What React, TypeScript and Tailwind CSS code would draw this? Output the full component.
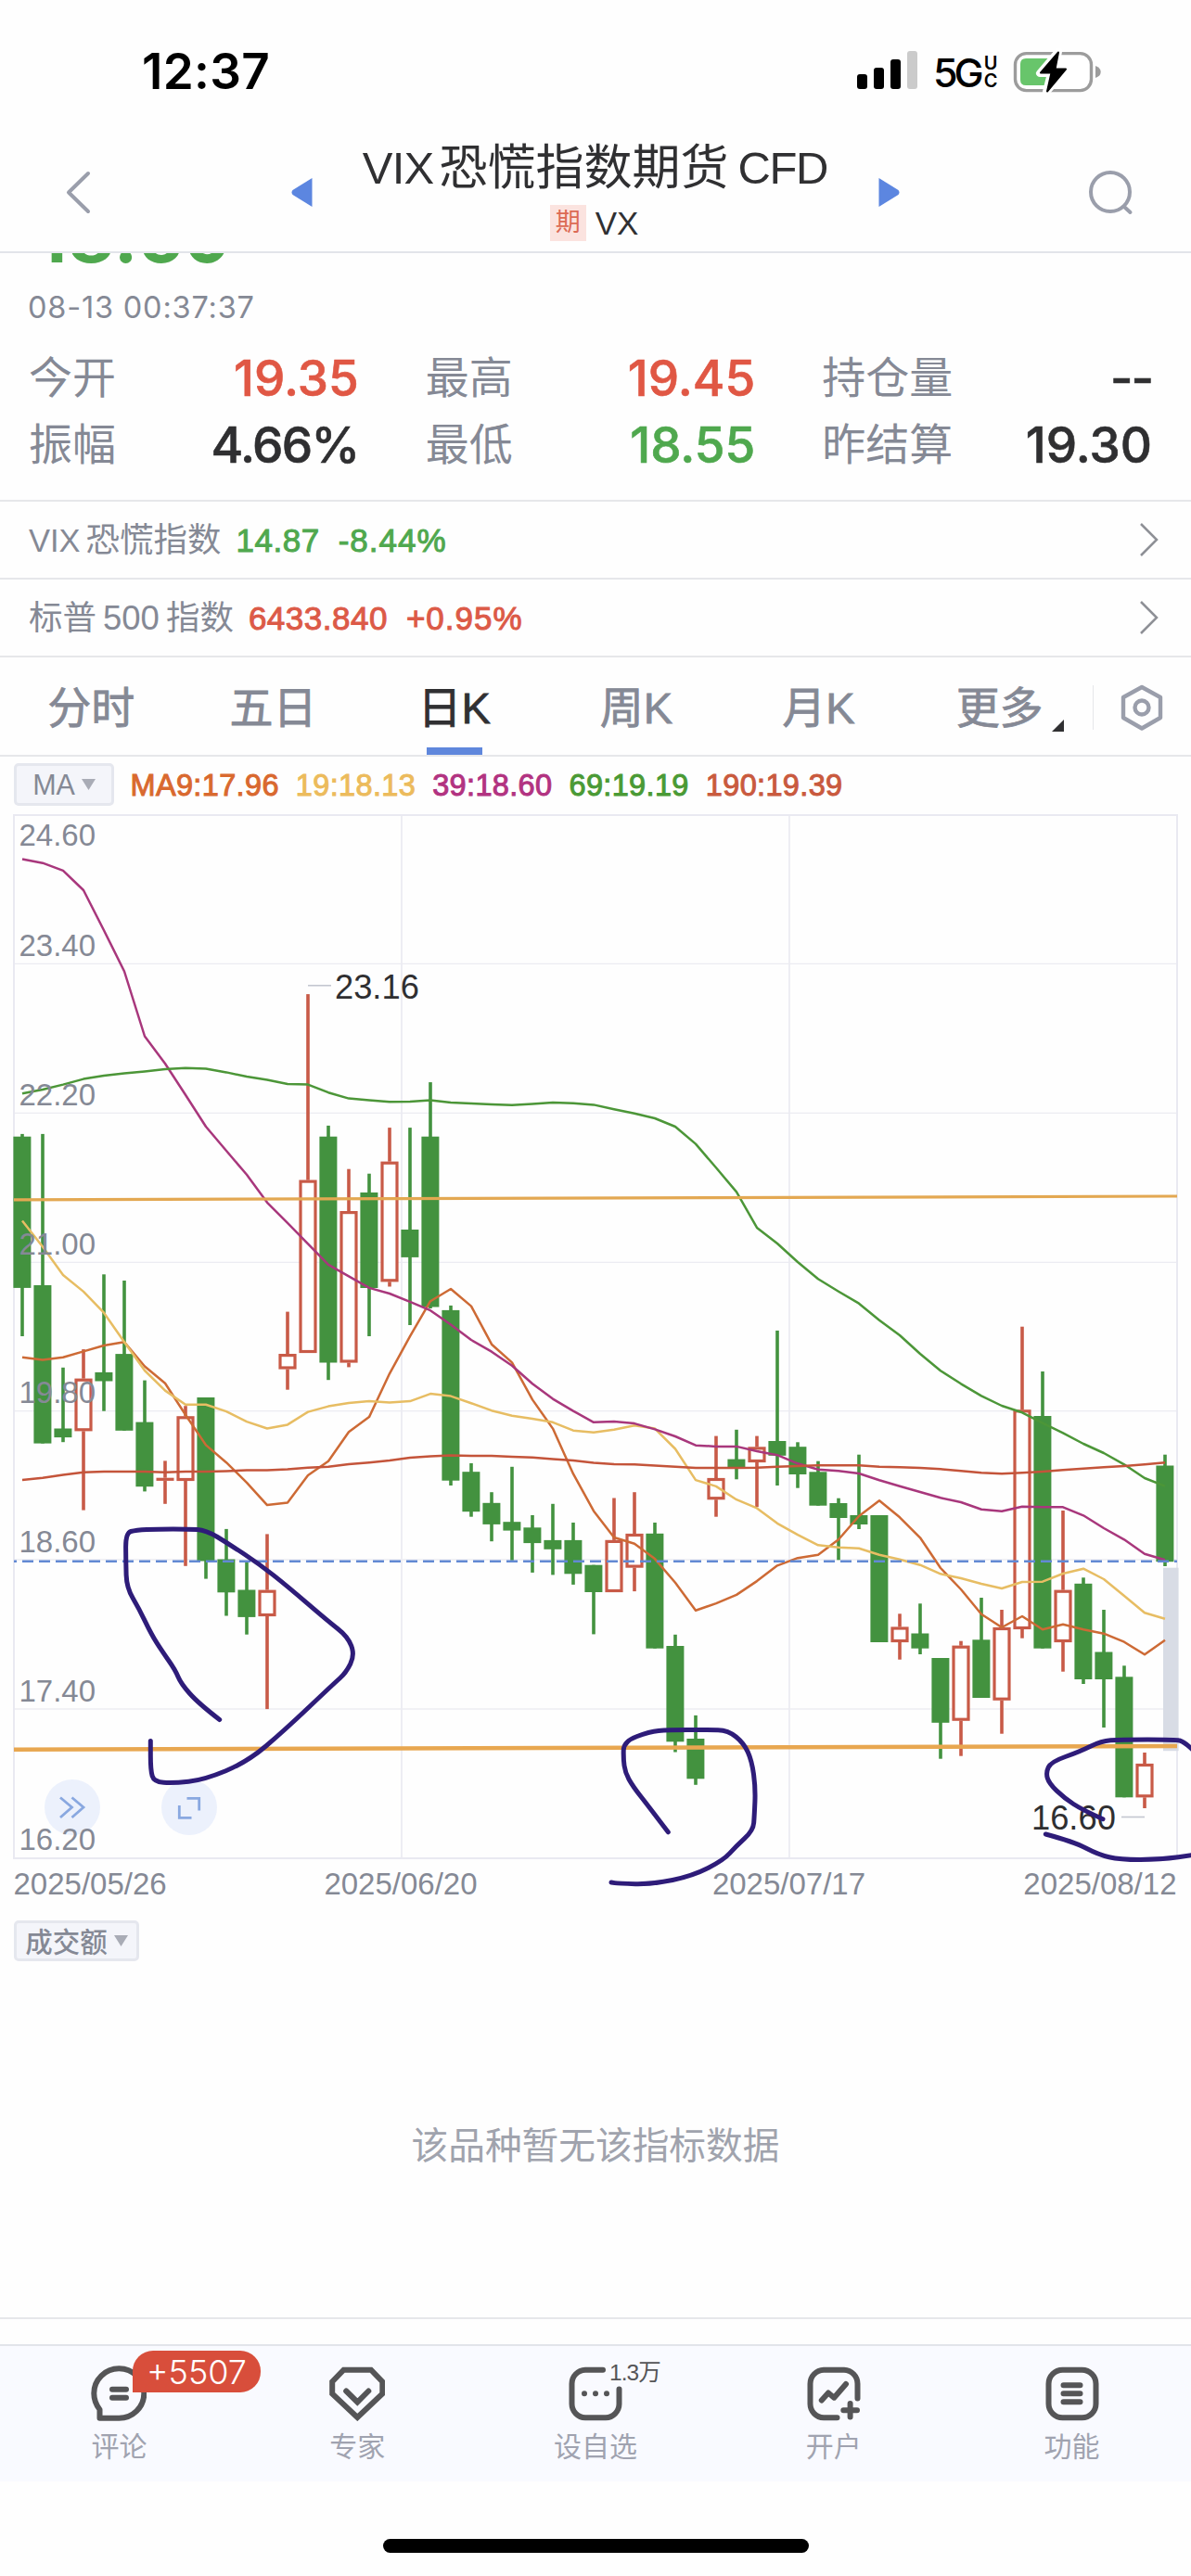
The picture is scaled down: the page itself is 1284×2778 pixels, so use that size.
import React from "react";

type Candle = [kind: "g" | "r", high: number, top: number, bottom: number, low: number];

const CANDLES: Candle[] = [
  ["g", 1222.9, 1225.7, 1388.9, 1441],
  ["g", 1222.9, 1386, 1556.6, 1556.6],
  ["g", 1474.8, 1540.5, 1550.1, 1555.2],
  ["r", 1455.1, 1486.7, 1543.3, 1628.6],
  ["g", 1374.3, 1479.9, 1489.5, 1521.7],
  ["g", 1381, 1460.1, 1542.8, 1542.8],
  ["g", 1488.6, 1533.6, 1603.2, 1608.4],
  ["r", 1575.4, 1593.7, 1596.9, 1621.8],
  ["r", 1516.2, 1527.3, 1597, 1688.8],
  ["g", 1507, 1507, 1683.5, 1702.6],
  ["g", 1648.9, 1681.5, 1717.3, 1742.5],
  ["g", 1683.3, 1714.5, 1743.9, 1762.7],
  ["r", 1654.4, 1714.7, 1743, 1843.1],
  ["r", 1414.6, 1460.1, 1476.5, 1498.7],
  ["r", 1072.1, 1272.6, 1459, 1459],
  ["g", 1213.9, 1225.7, 1469.5, 1488.2],
  ["r", 1260.7, 1306.1, 1469.5, 1474.4],
  ["g", 1265.7, 1286, 1389, 1441],
  ["r", 1216.1, 1252.7, 1382.3, 1387.5],
  ["g", 1216.1, 1326, 1355.9, 1429],
  ["g", 1167.1, 1225.7, 1409.5, 1411],
  ["g", 1407.9, 1412.9, 1596.7, 1602],
  ["g", 1578, 1587.2, 1630.2, 1635.7],
  ["g", 1609.2, 1620.8, 1643.9, 1662.2],
  ["g", 1581.8, 1641.2, 1650.6, 1682.8],
  ["g", 1634, 1647.3, 1664.1, 1695.9],
  ["g", 1621.8, 1660.9, 1670.8, 1698.4],
  ["g", 1642, 1660.9, 1697.3, 1708.9],
  ["g", 1687.7, 1687.7, 1717, 1762.4],
  ["r", 1615.5, 1660.9, 1717, 1717],
  ["r", 1609.2, 1654, 1690.6, 1716.1],
  ["g", 1642, 1653.8, 1777.7, 1777.7],
  ["g", 1762.8, 1775, 1878.3, 1889.5],
  ["g", 1849.9, 1875, 1918.3, 1924.8],
  ["r", 1548.6, 1594, 1617.2, 1635.7],
  ["g", 1541.8, 1573.6, 1582, 1595.3],
  ["r", 1548.6, 1560.4, 1577, 1625.2],
  ["g", 1434.9, 1554, 1569.8, 1602],
  ["g", 1555.3, 1560.2, 1590, 1604.7],
  ["g", 1575.7, 1587.3, 1623.7, 1623.7],
  ["g", 1615.7, 1621, 1637, 1682.3],
  ["g", 1568.7, 1634, 1644, 1649],
  ["g", 1634, 1634, 1771, 1771],
  ["r", 1740.3, 1754.5, 1771, 1789.7],
  ["g", 1729.3, 1761.5, 1777.7, 1784],
  ["g", 1788, 1788, 1857.8, 1896.7],
  ["r", 1769.7, 1774.7, 1855.7, 1893.7],
  ["g", 1723, 1768.3, 1831, 1831],
  ["r", 1736, 1755, 1833.7, 1869.7],
  ["r", 1430.7, 1520.3, 1757, 1766.7],
  ["g", 1479, 1527, 1777.7, 1777.7],
  ["r", 1629, 1714.7, 1771, 1802.7],
  ["g", 1701.3, 1707.8, 1811, 1816],
  ["g", 1736, 1781.5, 1811, 1863],
  ["g", 1796.3, 1808.3, 1938.3, 1938.3],
  ["r", 1890, 1902, 1938.3, 1950],
  ["g", 1568.7, 1580.5, 1684.2, 1689],
];

const MA39 = [926.4, 930.7, 938.9, 960, 1003.2, 1047.5, 1117.5, 1147, 1180.7, 1215, 1241, 1266.8, 1296.8, 1318.9, 1341.4, 1363.9, 1376.4, 1388.9, 1395, 1403.9, 1413.2, 1428.6, 1445, 1457.7, 1472.8, 1492.2, 1508.6, 1521.6, 1533.8, 1533, 1535.1, 1541.4, 1549, 1558.7, 1559.9, 1559.9, 1565, 1569.2, 1578.3, 1584.7, 1586.3, 1589, 1596.3, 1602.7, 1609, 1615.3, 1620, 1627.7, 1629.7, 1624.7, 1625.3, 1625.3, 1634.3, 1648, 1660.3, 1675.7, 1682.3];
const MA69 = [1179.3, 1175, 1169.6, 1163.6, 1160, 1157.5, 1155.4, 1152.9, 1151.8, 1152.5, 1156.4, 1161, 1164.6, 1168.9, 1169.6, 1178.2, 1184.6, 1186.4, 1188.2, 1187.9, 1186.4, 1188.9, 1190, 1190.9, 1191.8, 1190.5, 1188.9, 1189.8, 1191.4, 1196.2, 1200.7, 1206, 1215, 1233.6, 1259.3, 1285.4, 1323.9, 1341, 1361, 1379.3, 1392.7, 1405.7, 1423.7, 1440, 1460, 1478.3, 1492.3, 1505.3, 1516, 1523.3, 1534.7, 1545.3, 1557, 1567, 1579.3, 1594, 1602.7];
const MA19 = [1316.4, 1344.6, 1375, 1392.9, 1415.7, 1447.3, 1478, 1499.6, 1514.8, 1514.8, 1522.1, 1533.1, 1540.5, 1536.4, 1522.6, 1516.6, 1512.9, 1511.1, 1512.5, 1511.1, 1503.1, 1505.6, 1513.2, 1521.2, 1526.7, 1530, 1533.8, 1542.7, 1544.8, 1541.8, 1537.2, 1540.6, 1562.5, 1596.1, 1602.9, 1617.2, 1626.4, 1642.8, 1655.2, 1666.3, 1668.7, 1669.7, 1676.7, 1681.7, 1687.7, 1697.3, 1702, 1708, 1713, 1706, 1705.7, 1697, 1691.7, 1703, 1721, 1739.3, 1745.7];
const MA9 = [1463.8, 1466.6, 1463.8, 1457.4, 1451, 1447.3, 1473.5, 1491.8, 1525.8, 1558.4, 1577.2, 1598.8, 1623.1, 1620.4, 1591, 1575.8, 1544.2, 1528.1, 1481.3, 1441.2, 1403.2, 1390, 1408.6, 1449.7, 1469.4, 1509.4, 1540.6, 1589.4, 1629.4, 1658, 1664.7, 1681.1, 1706.8, 1736.7, 1729.1, 1719.9, 1705.1, 1688.3, 1680.2, 1676.7, 1660.3, 1635, 1618.3, 1636.3, 1658.3, 1691, 1714, 1740.7, 1755, 1743, 1757.3, 1751.7, 1757.3, 1761.7, 1770.7, 1784.3, 1768.7];
const MA190 = [1596, 1593.8, 1590.5, 1587.8, 1586.9, 1586.9, 1586.9, 1587.8, 1586.9, 1586.9, 1586.4, 1585.5, 1585.5, 1584.6, 1582.7, 1581.8, 1579.1, 1577.2, 1574.9, 1572.1, 1570.5, 1569.6, 1570, 1570, 1570.9, 1571.7, 1573.4, 1575.1, 1577.6, 1578.9, 1579.3, 1580.6, 1581.8, 1583.1, 1583.1, 1583.1, 1582.7, 1581.8, 1581, 1580.3, 1580.3, 1580.3, 1581.7, 1582.3, 1583, 1584.3, 1586.3, 1588.3, 1589.3, 1588.3, 1587, 1585.3, 1583.7, 1582.3, 1581, 1579.3, 1577.3];

const xAt = (i: number) => 24 + 22 * i;
const poly = (ys: number[]) => ys.map((y, i) => `${xAt(i)},${y}`).join(" ");

// Smooths a pen stroke by running quadratic curves through segment midpoints.
function smooth(p: number[][]) {
  let d = `M${p[0][0]} ${p[0][1]}`;
  for (let i = 1; i < p.length - 1; i++) {
    const mx = (p[i][0] + p[i + 1][0]) / 2;
    const my = (p[i][1] + p[i + 1][1]) / 2;
    d += ` Q${p[i][0]} ${p[i][1]} ${mx} ${my}`;
  }
  const l = p[p.length - 1];
  return `${d} L${l[0]} ${l[1]}`;
}

const PEN = [
  [[236.7, 1854.5], [214, 1837], [195, 1815.5], [189, 1801], [175, 1781], [163.3, 1762.7], [150, 1735], [136.5, 1712], [135.7, 1684.7], [135.5, 1653], [146.7, 1650], [170, 1648.9], [203.3, 1648.9], [222, 1650], [246.7, 1665], [280, 1687], [310, 1710.8], [353.3, 1748], [375, 1765], [382.5, 1784.8], [373, 1804], [360, 1815.5], [306.7, 1866], [266.7, 1900], [220, 1919.5], [186.7, 1923], [166, 1921.5], [162.3, 1909], [162.3, 1877.5]],
  [[720.3, 1975.8], [700, 1949], [682, 1926], [674, 1911.4], [672, 1896.6], [672.5, 1878], [700, 1867.5], [720, 1865.5], [763.3, 1865.5], [785, 1866], [802, 1880], [810.5, 1898.7], [814.5, 1928.2], [813.3, 1957.7], [812, 1974], [793.3, 1991.3], [780, 2006], [746.7, 2023], [703.3, 2032], [666.7, 2031.3], [659, 2030]],
  [[1189, 1961.7], [1167.3, 1952], [1147.3, 1939], [1131, 1923.3], [1127.5, 1911.7], [1133, 1900], [1164, 1889], [1187.3, 1877.5], [1207.3, 1876], [1267.3, 1876], [1276, 1878], [1290, 1891]],
  [[1127.3, 1978], [1157.3, 1986], [1184, 2000], [1207.3, 2005.5], [1250.7, 2005.5], [1290, 2000]],
];

const AXIS: [string, number][] = [
  ["24.60", 912], ["23.40", 1030.7], ["22.20", 1192], ["21.00", 1352.9],
  ["19.80", 1513], ["18.60", 1674], ["17.40", 1834.8], ["16.20", 1995],
];

function Chart() {
  return (
    <svg className="block h-[1184px] w-full font-['Liberation_Sans',sans-serif]" viewBox="0 876 1284 1184">
      <g stroke="#ececf2" strokeWidth="1.3">
        {[1039.3, 1200.4, 1361.4, 1521.7, 1682, 1843].map((y) => (
          <line key={y} x1="15" x2="1269" y1={y} y2={y} />
        ))}
        <line x1="433" x2="433" y1="879" y2="2004" strokeWidth="1.8" />
        <line x1="851" x2="851" y1="879" y2="2004" strokeWidth="1.8" />
        <rect x="15" y="879" width="1254" height="1125" fill="none" stroke="#e9e9f1" strokeWidth="2" />
      </g>
      <rect x="1254" y="1690.7" width="16.6" height="197.5" fill="#d8dce5" />
      {[78, 204].map((x) => (
        <circle key={x} cx={x} cy="1949" r="30" fill="#ecf1fc" />
      ))}
      <g fill="none" stroke="#89a8e0" strokeWidth="2.8">
        <path d="M65 1938.5 L77.5 1949 L65 1960 M77.5 1938.5 L90 1949 L77.5 1960" />
        <path d="M201.5 1939.3 H214.7 V1952.5 M193.3 1947 V1960.3 H206.5" />
      </g>
      {CANDLES.map(([kind, high, top, bottom, low], i) => {
        const x = xAt(i);
        if (kind === "g")
          return (
            <g key={i} fill="#43923f">
              <rect x={x - 1.8} y={high} width="3.6" height={low - high} />
              <rect x={x - 9.6} y={top} width="19" height={bottom - top} />
            </g>
          );
        return (
          <g key={i} fill="#c85a47">
            <rect x={x - 1.8} y={high} width="3.6" height={top - high} />
            <rect x={x - 1.8} y={bottom} width="3.6" height={low - bottom} />
            {bottom - top < 5 ? (
              <rect x={x - 9.5} y={top} width="19" height={bottom - top} />
            ) : (
              <rect x={x - 8} y={top + 1.5} width="16" height={bottom - top - 3} fill="#fff" stroke="#c85a47" strokeWidth="3.2" />
            )}
          </g>
        );
      })}
      <g fill="none" strokeWidth="2.5" strokeLinejoin="round">
        <polyline points={poly(MA9)} stroke="#cd6a35" />
        <polyline points={poly(MA19)} stroke="#e7bd63" />
        <polyline points={poly(MA39)} stroke="#a8377c" />
        <polyline points={poly(MA69)} stroke="#4c9638" />
        <polyline points={poly(MA190)} stroke="#c4543a" />
      </g>
      <line x1="15" y1="1683.7" x2="1269" y2="1683.7" stroke="#6289d3" strokeWidth="2.6" strokeDasharray="12 6" strokeDashoffset="9" />
      <line x1="15" y1="1293.9" x2="1269" y2="1290" stroke="#e3a852" strokeWidth="3.2" />
      <line x1="15" y1="1886.7" x2="1269" y2="1883" stroke="#e8a750" strokeWidth="4.6" />
      <g fill="#858995" fontSize="33">
        {AXIS.map(([t, y]) => (
          <text key={t} x="20.5" y={y}>{t}</text>
        ))}
        <text x="14.5" y="2042.5">2025/05/26</text>
        <text x="432" y="2042.5" textAnchor="middle">2025/06/20</text>
        <text x="850.5" y="2042.5" textAnchor="middle">2025/07/17</text>
        <text x="1268.5" y="2042.5" textAnchor="end">2025/08/12</text>
      </g>
      <g stroke="#c4c7d0" strokeWidth="1.6">
        <line x1="332" x2="357" y1="1062.8" y2="1062.8" />
        <line x1="1209" x2="1234" y1="1959.5" y2="1959.5" />
      </g>
      <g fill="#2f2f31" fontSize="36.3">
        <text x="361" y="1076.6">23.16</text>
        <text x="1112" y="1972.7">16.60</text>
      </g>
      <g fill="none" stroke="#2e1c79" strokeWidth="5" strokeLinecap="round" strokeLinejoin="round">
        {PEN.map((p, i) => (
          <path key={i} d={smooth(p)} />
        ))}
      </g>
    </svg>
  );
}

function StatusBar() {
  return (
    <div className="flex h-[150px] items-start justify-between pl-[153px] pr-[97px]">
      <span className="mt-[45px] font-['Inter',sans-serif] text-[53px] leading-[64px] font-semibold tracking-[0.3px] text-black">12:37</span>
      <div className="mt-[52px] flex items-start">
        <svg className="mr-[16px] h-[48px] w-[66px]" viewBox="925 52 66 48">
          <rect x="925" y="80" width="11" height="16" rx="3" />
          <rect x="943" y="73" width="11" height="23" rx="3" />
          <rect x="961" y="64" width="11" height="32" rx="3" />
          <rect x="979" y="55" width="11" height="41" rx="3" fill="#cbcbcb" />
        </svg>
        <span className="mt-[10px] w-[53px] font-['Inter',sans-serif] text-[43px] leading-[32px] font-medium tracking-[-4px] text-black">5G</span>
        <span className="mt-[7px] mr-[14px] flex w-[18px] flex-col items-center font-['Inter',sans-serif] text-[20px] leading-[19px] font-semibold text-black">
          <span>U</span>
          <span>C</span>
        </span>
        <svg className="h-[50px] w-[96px]" viewBox="1091 50 96 50">
          <rect x="1094.5" y="55.6" width="82" height="40" rx="12" fill="#fff" stroke="#9c9c9c" strokeWidth="3.4" />
          <path d="M1106 61 H1130 V90 H1106 Q1100 90 1100 84 V67 Q1100 61 1106 61Z" fill="#68c56b" />
          <path d="M1181 69 Q1186.7 71 1186.7 75.5 Q1186.7 80 1181 82Z" fill="#9c9c9c" />
          <path d="M1141 53.5 L1121 77 H1133 L1128 97 L1150 72.5 H1137.5Z" fill="#000" stroke="#fff" strokeWidth="8" strokeLinejoin="round" />
          <path d="M1141 54.5 L1122 76.5 H1133.5 L1129 96.5 L1149 72.5 H1137.5Z" fill="#000" stroke="#000" strokeWidth="2" strokeLinejoin="round" />
        </svg>
      </div>
    </div>
  );
}

function Header() {
  return (
    <header className="flex h-[123px] items-start justify-between border-b-2 border-[#e2e4ea] pr-[61px] pl-[70px]">
      <svg className="mt-[34px] h-[48px] w-[30px]" viewBox="0 0 30 48" fill="none" stroke="#9a9eab" strokeWidth="4" strokeLinecap="round" strokeLinejoin="round">
        <path d="M25 3 L4 23.5 L25 44" />
      </svg>
      <div className="ml-[10px] flex items-start">
        <svg className="mt-[42px] mr-[55px] h-[32px] w-[23px]" viewBox="0 0 23 32" fill="#5c86e0">
          <path d="M22.5 0 V31 L1.5 18 Q-.5 15.5 1.5 13Z" />
        </svg>
        <div className="flex w-[500px] flex-col items-center">
          <div className="mt-px flex text-[49px] leading-[60px] whitespace-nowrap text-[#303032]">
            <span className="tracking-[-0.8px]">VIX</span>
            <span className="ml-[6px] text-[52px]">恐慌指数期货</span>
            <span className="ml-[10px] tracking-[-1.3px]">CFD</span>
          </div>
          <div className="mt-[10px] mr-[2px] flex items-center">
            <span className="flex h-[39px] w-[39px] items-center justify-center bg-[#fbe3df] text-[27px] leading-none text-[#dc6a55]">期</span>
            <span className="ml-[10px] text-[35px] leading-[39px] text-[#303032]">VX</span>
          </div>
        </div>
        <svg className="mt-[42px] ml-[55px] h-[32px] w-[23px]" viewBox="0 0 23 32" fill="#5c86e0">
          <path d="M.5 0 V31 L21.5 18 Q23.5 15.5 21.5 13Z" />
        </svg>
      </div>
      <svg className="mt-[33px] h-[50px] w-[50px]" viewBox="0 0 50 50" fill="none" stroke="#9a9eab" strokeWidth="4" strokeLinecap="round">
        <circle cx="24" cy="24" r="21" />
        <path d="M39 40 L45.5 46" />
      </svg>
    </header>
  );
}

const QUOTES = [
  ["今开", "19.35", "tracking-[0px] text-[#e05744]"],
  ["最高", "19.45", "tracking-[0px] text-[#e05744]"],
  ["持仓量", "--", "tracking-[-2px] text-[#2f2f31]"],
  ["振幅", "4.66%", "tracking-[-1.6px] text-[#2f2f31]"],
  ["最低", "18.55", "tracking-[0px] text-[#4fa84e]"],
  ["昨结算", "19.30", "tracking-[0px] text-[#2f2f31]"],
];

function Quotes() {
  return (
    <section className="h-[266px] overflow-hidden">
      <div className="-mt-[56px] pl-[39px] font-['Inter',sans-serif] text-[77px] leading-[76px] font-bold tracking-[1px] text-[#4fa84e]">18.59</div>
      <div className="mt-[19px] pl-[30px] font-['Inter',sans-serif] text-[32.5px] leading-[40px] tracking-[0.8px] text-[#858995]">08-13 00:37:37</div>
      <div className="mt-[20px] grid grid-cols-3 gap-x-[72px] px-[31px] pr-[42px]">
        {QUOTES.map(([label, value, color]) => (
          <div key={label} className="flex h-[72px] items-center justify-between whitespace-nowrap">
            <span className="text-[47px] leading-[72px] text-[#858995]">{label}</span>
            <span className={`font-['Inter',sans-serif] text-[53px] leading-[72px] font-medium [-webkit-text-stroke:0.6px_currentColor] ${color}`}>{value}</span>
          </div>
        ))}
      </div>
    </section>
  );
}

function IndexRow({ name, value, change, color }: { name: React.ReactNode; value: string; change: string; color: string }) {
  return (
    <div className="flex h-[84px] items-center border-t-2 border-[#e6e7ea] pr-[34px] pl-[31px] whitespace-nowrap">
      <span className="mt-[2px] flex text-[36.5px] leading-[60px] text-[#858995]">{name}</span>
      <span className={`mt-[2px] flex text-[35px] leading-[60px] [-webkit-text-stroke:1px_currentColor] ${color}`}>
        <span className="ml-[16px] tracking-[0.5px]">{value}</span>
        <span className="ml-[20px] tracking-[1px]">{change}</span>
      </span>
      <svg className="ml-auto h-[38px] w-[22px]" viewBox="0 0 22 38" fill="none" stroke="#8e9096" strokeWidth="2.5">
        <path d="M2 2 L19 19 L2 36" />
      </svg>
    </div>
  );
}

const TABS = ["分时", "五日", "日K", "周K", "月K", "更多"];

function Tabs() {
  return (
    <nav className="flex h-[109px] border-t-2 border-b-2 border-[#e6e7ea]">
      {TABS.map((t) => (
        <div key={t} className={`relative w-[196.3px] text-center text-[47px] leading-[109px] [-webkit-text-stroke:0.8px_currentColor] ${t === "日K" ? "text-[#303032]" : "text-[#858995]"}`}>
          <span className={t === "更多" ? "relative right-[2px]" : t.endsWith("K") ? "relative right-[1px]" : ""}>{t}</span>
          {t === "日K" && <i className="absolute bottom-0 left-[67px] h-[8px] w-[60px] bg-[#5f87dc]" />}
          {t === "更多" && (
            <svg className="absolute right-[31px] bottom-[25px] h-[13px] w-[13px]" viewBox="0 0 13 13">
              <path d="M13 0 V13 H0Z" fill="#303032" />
            </svg>
          )}
        </div>
      ))}
      <div className="mt-[30px] h-[48px] w-px bg-[#e6e7ea]" />
      <svg className="mt-[28px] ml-[27px] h-[52px] w-[50px]" viewBox="0 0 50 52" fill="none" stroke="#9a9eab" strokeWidth="4.4" strokeLinejoin="round">
        <path d="M25 4 L45 15 V37 L25 48.5 L5 37 V15Z" />
        <circle cx="25" cy="26" r="7.5" />
      </svg>
    </nav>
  );
}

const MAS = [
  ["MA9:17.96", "text-[#d9692f]"],
  ["19:18.13", "text-[#ecbb5c]"],
  ["39:18.60", "text-[#b23381]"],
  ["69:19.19", "text-[#4a9a35]"],
  ["190:19.39", "text-[#c95a3e]"],
];

function Caret() {
  return (
    <svg className="h-[12px] w-[15px]" viewBox="0 0 15 12">
      <path d="M0 0 H15 L7.5 12Z" fill="#a9acb6" />
    </svg>
  );
}

function MaRow() {
  return (
    <div className="flex h-[60px] items-center pl-[15px]">
      <button className="flex h-[46px] w-[108px] items-center justify-center gap-[7px] rounded-[5px] border-[3px] border-[#e5e7ee] bg-[#f4f5fa] text-[30.5px] leading-[42px] text-[#858995]">
        MA
        <Caret />
      </button>
      <div className="mt-px ml-[17.5px] flex gap-[18px] text-[32.5px] leading-[40px] tracking-[0.35px] whitespace-nowrap [-webkit-text-stroke:1px_currentColor]">
        {MAS.map(([t, c]) => (
          <span key={t} className={c}>{t}</span>
        ))}
      </div>
    </div>
  );
}

const iconProps = {
  className: "block h-[60px] w-[60px]",
  viewBox: "0 0 60 60",
  fill: "none",
  stroke: "#555557",
  strokeWidth: 6,
  strokeLinecap: "round" as const,
  strokeLinejoin: "round" as const,
};

const NAV: { label: string; icon: React.ReactNode; extra?: React.ReactNode }[] = [
  {
    label: "评论",
    icon: (
      <svg {...iconProps}>
        <path d="M9.5 56.7 H30 A27 26.7 0 1 0 3.3 30 C3.3 37 6 43 9.5 47.5Z" />
        <path d="M23 25.7 H38 M23 34.8 H38" />
      </svg>
    ),
    extra: (
      <span className="absolute top-[5px] left-[143px] flex h-[45px] w-[138px] items-center justify-center rounded-[22px] rounded-bl-none bg-[#d84e3b] font-['Inter',sans-serif] text-[36px] font-light text-white">
        +5507
      </span>
    ),
  },
  {
    label: "专家",
    icon: (
      <svg {...iconProps} strokeLinejoin="miter" strokeLinecap="butt">
        <path d="M15.5 4.7 H45 L57.3 17.5 V30.5 L30.3 56 L3.2 30.5 V17.5Z" />
        <path d="M18.2 27.5 L30.3 39.5 L42.3 27.5" strokeLinecap="round" />
      </svg>
    ),
  },
  {
    label: "设自选",
    icon: (
      <svg {...iconProps}>
        <path d="M38 4.7 H19 A15 15 0 0 0 4.5 19.7 V41.5 A15 15 0 0 0 19 56.3 H41 A15 15 0 0 0 55.5 41.5 V25.5" />
        <path d="M18 30.3 h.01 M30 30.3 h.01 M42 30.3 h.01" />
      </svg>
    ),
    extra: (
      <span className="absolute top-[15px] left-[143.5px] text-[24.5px] leading-[28px] tracking-[-1px] whitespace-nowrap text-[#555557]">1.3万</span>
    ),
  },
  {
    label: "开户",
    icon: (
      <svg {...iconProps}>
        <path d="M33.5 56.3 H19 A15 15 0 0 1 4.5 41.5 V19.7 A15 15 0 0 1 19 4.7 H41 A15 15 0 0 1 55.5 19.7 V35.5" />
        <path d="M16.8 37.5 L24 29.5 L30.2 34.7 L43 20" />
        <path d="M47.6 41 V55.5 M40.3 48.2 H55" />
      </svg>
    ),
  },
  {
    label: "功能",
    icon: (
      <svg {...iconProps}>
        <rect x="4.5" y="4.7" width="51" height="51.6" rx="15" />
        <path d="M20.5 21.3 H38.5 M20.5 30.3 H38.5 M20.5 39.3 H38.5" />
      </svg>
    ),
  },
];

export default function App() {
  return (
    <div className="flex h-[2778px] w-[1284px] flex-col overflow-hidden bg-[#fefefe] font-['Liberation_Sans','Noto_Sans_CJK_SC',sans-serif]">
      <StatusBar />
      <Header />
      <Quotes />
      <IndexRow
        name={<><span className="text-[34.5px]">VIX</span><span className="ml-[6px]">恐慌指数</span></>}
        value="14.87"
        change="-8.44%"
        color="text-[#4fa84e]"
      />
      <IndexRow
        name={<><span>标普</span><span className="ml-[7px]">500</span><span className="ml-[7px]">指数</span></>}
        value="6433.840"
        change="+0.95%"
        color="text-[#dc5a47]"
      />
      <Tabs />
      <MaRow />
      <Chart />
      <div className="mt-[11px] pl-[15px]">
        <button className="flex h-[44px] w-[135px] items-center justify-center gap-[7px] rounded-[5px] border-[3px] border-[#e5e7ee] bg-[#f4f5fa] text-[29.5px] leading-[40px] font-medium text-[#858995]">
          <span className="mt-[3px]">成交额</span>
          <Caret />
        </button>
      </div>
      <div className="mt-[169px] text-center text-[39.7px] leading-[60px] text-[#a0a3ad]">该品种暂无该指标数据</div>
      <div className="mt-auto h-[29px] shrink-0 border-t-2 border-[#e6e7ea]" />
      <footer className="flex h-[148px] shrink-0 border-t-2 border-[#e2e4ea] bg-[#f9faff]">
        {NAV.map(({ label, icon, extra }) => (
          <div key={label} className="relative flex flex-1 flex-col items-center pt-[21px]">
            {icon}
            {extra}
            <span className="mt-[6px] text-[30px] leading-[44px] text-[#a0a3b0]">{label}</span>
          </div>
        ))}
      </footer>
      <div className="flex h-[102px] shrink-0 items-start justify-center pt-[62px]">
        <div className="h-[15px] w-[459px] rounded-full bg-black" />
      </div>
    </div>
  );
}
